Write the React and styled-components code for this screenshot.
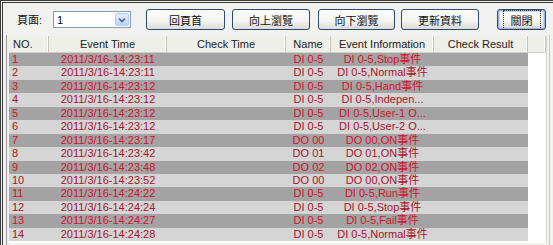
import React from "react";
import styled, { createGlobalStyle } from "styled-components";

const GlobalStyle = createGlobalStyle`
  html, body {
    margin: 0;
    padding: 0;
    background: #f1f1ef;
    font-family: "Liberation Sans", "Noto Sans CJK TC", sans-serif;
  }
`;

const COLS = "40px 118px 119px 45px 103px 94px";

const Frame = styled.div`
  width: 550px;
  height: 242px;
  border-left: 3px double #3a3a3a;
  border-top: 3px double #3a3a3a;
  background: #f1f1ef;
  display: flex;
  flex-direction: column;
`;

const Toolbar = styled.div`
  height: 32px;
  display: flex;
  align-items: center;
  padding-left: 14px;
  padding-top: 0;
  box-sizing: border-box;
`;

const Label = styled.span`
  font-size: 11px;
  color: #111;
  width: 36px;
`;

const Select = styled.div`
  width: 73px;
  height: 15px;
  border: 1px solid #7f9db9;
  background: #fff;
  display: flex;
  align-items: center;
  justify-content: space-between;
  font-size: 11px;
  color: #000;
  padding-left: 3px;
  margin-right: 15px;
  margin-top: 1px;
`;

const DropBtn = styled.div`
  width: 14px;
  height: 13px;
  margin-right: 1px;
  border: 1px solid #b6c8ef;
  border-radius: 2px;
  background: linear-gradient(#e2ebfd, #c1d3fb);
  display: flex;
  align-items: center;
  justify-content: center;
  box-sizing: border-box;
`;

const Button = styled.div`
  width: ${(p) => p.$w}px;
  height: 21px;
  margin-right: ${(p) => p.$gap}px;
  margin-top: 1px;
  box-sizing: border-box;
  border: 1px solid #2a4a72;
  border-radius: 3px;
  background: linear-gradient(#ffffff, #f2f2ee 60%, #dcdcd6);
  display: flex;
  align-items: center;
  justify-content: center;
  font-size: 11px;
  color: #111;
  box-shadow: ${(p) => (p.$focus ? "inset 0 0 0 1px #9cb8e8, inset 0 0 0 2px #c4d6f4" : "none")};
`;

const FocusRing = styled.span`
  border: 1px dotted #333;
  padding: 1px 7px;
`;

const ListArea = styled.div`
  flex: 1;
  display: flex;
  margin-left: 3px;
  border-left: 1px solid #9a9a9a;
`;

const List = styled.div`
  width: 537px;
  margin-left: 2px;
  margin-top: 1px;
  background: #fff;
  border-right: 1px solid #d8d8d2;
  height: 207px;
`;

const HeaderRow = styled.div`
  display: grid;
  grid-template-columns: ${COLS} 18px;
  height: 16px;
  background: #efefea;
  border-bottom: 1px solid #d0d0c6;
`;

const HeadCell = styled.div`
  font-size: 11px;
  color: #222;
  line-height: 16px;
  text-align: ${(p) => p.$align || "center"};
  padding-left: ${(p) => (p.$align === "left" ? "4px" : "0")};
  border-right: 1px solid #c4c4ba;
  box-shadow: inset -1px 0 0 #fff;
  white-space: nowrap;
  overflow: hidden;
`;

const Row = styled.div`
  display: grid;
  grid-template-columns: ${COLS};
  width: 519px;
  height: 13.45px;
  background: ${(p) => (p.$dark ? "#a3a3a3" : "#d5d5d5")};
  color: ${(p) => (p.$dark ? "#d3102c" : "#a5132a")};
`;

const Cell = styled.div`
  font-size: 11px;
  line-height: 13.45px;
  text-align: ${(p) => p.$align || "center"};
  padding-left: ${(p) => (p.$align === "left" ? "3px" : "0")};
  white-space: nowrap;
  overflow: hidden;
`;

const SideStrip = styled.div`
  width: 3px;
  margin-left: 2px;
  border-left: 1px solid #c9c9c0;
`;

const rows = [
  ["2011/3/16-14:23:11", "DI 0-5", "DI 0-5,Stop事件"],
  ["2011/3/16-14:23:11", "DI 0-5", "DI 0-5,Normal事件"],
  ["2011/3/16-14:23:12", "DI 0-5", "DI 0-5,Hand事件"],
  ["2011/3/16-14:23:12", "DI 0-5", "DI 0-5,Indepen..."],
  ["2011/3/16-14:23:12", "DI 0-5", "DI 0-5,User-1 O..."],
  ["2011/3/16-14:23:12", "DI 0-5", "DI 0-5,User-2 O..."],
  ["2011/3/16-14:23:17", "DO 00", "DO 00,ON事件"],
  ["2011/3/16-14:23:42", "DO 01", "DO 01,ON事件"],
  ["2011/3/16-14:23:48", "DO 02", "DO 02,ON事件"],
  ["2011/3/16-14:23:52", "DO 00", "DO 00,ON事件"],
  ["2011/3/16-14:24:22", "DI 0-5", "DI 0-5,Run事件"],
  ["2011/3/16-14:24:24", "DI 0-5", "DI 0-5,Stop事件"],
  ["2011/3/16-14:24:27", "DI 0-5", "DI 0-5,Fail事件"],
  ["2011/3/16-14:24:28", "DI 0-5", "DI 0-5,Normal事件"],
];

export default function App() {
  return (
    <>
      <GlobalStyle />
      <Frame>
        <Toolbar>
          <Label>頁面:</Label>
          <Select>
            1
            <DropBtn>
              <svg width="8" height="6" viewBox="0 0 8 6">
                <path d="M1 1.5 L4 4.5 L7 1.5" fill="none" stroke="#4d6185" strokeWidth="1.6" />
              </svg>
            </DropBtn>
          </Select>
          <Button $w={79} $gap={7}>回頁首</Button>
          <Button $w={78} $gap={8}>向上瀏覽</Button>
          <Button $w={77} $gap={6}>向下瀏覽</Button>
          <Button $w={78} $gap={18}>更新資料</Button>
          <Button $w={49} $gap={0} $focus>
            <FocusRing>關閉</FocusRing>
          </Button>
        </Toolbar>
        <ListArea>
          <List>
            <HeaderRow>
              <HeadCell $align="left">NO.</HeadCell>
              <HeadCell>Event Time</HeadCell>
              <HeadCell>Check Time</HeadCell>
              <HeadCell>Name</HeadCell>
              <HeadCell>Event Information</HeadCell>
              <HeadCell>Check Result</HeadCell>
              <HeadCell />
            </HeaderRow>
            {rows.map((r, i) => (
              <Row key={i} $dark={i % 2 === 0}>
                <Cell $align="left">{i + 1}</Cell>
                <Cell>{r[0]}</Cell>
                <Cell />
                <Cell>{r[1]}</Cell>
                <Cell>{r[2]}</Cell>
                <Cell />
              </Row>
            ))}
          </List>
          <SideStrip />
        </ListArea>
      </Frame>
    </>
  );
}
